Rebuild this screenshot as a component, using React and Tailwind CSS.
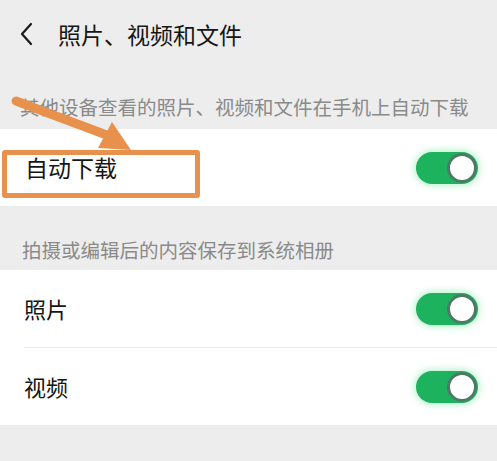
import React from "react";

function Toggle() {
  return (
    <div className="relative h-[32px] w-[62px] rounded-full bg-[#1db35e] shadow-[0_0_6px_2px_rgba(60,220,120,0.35)]">
      <div className="absolute right-[1px] top-[1px] h-[30px] w-[30px] rounded-full border-[3px] border-[#4d7a66] bg-white" />
    </div>
  );
}

function Row({ label, divider }) {
  return (
    <div className="relative bg-white">
      <div className="flex h-[77px] items-center justify-between pl-[24px] pr-[19px]">
        <span className="text-[22px] text-[#151515]">{label}</span>
        <Toggle />
      </div>
      {divider && <div className="ml-[24px] h-px bg-[#ebebeb]" />}
    </div>
  );
}

export default function App() {
  return (
    <div
      className="relative h-[461px] w-[497px] overflow-hidden bg-[#ededed]"
      style={{ fontFamily: '"Noto Sans CJK SC", "Noto Sans", sans-serif' }}
    >
      <div className="flex h-[68px] items-center pl-[18px]">
        <svg width="18" height="26" viewBox="0 0 18 26" className="mr-[22px]">
          <path d="M13 3 L4 13 L13 23" fill="none" stroke="#1a1a1a" strokeWidth="2.2" strokeLinecap="round" strokeLinejoin="round" />
        </svg>
        <span className="text-[23px] text-[#151515]">照片、视频和文件</span>
      </div>
      <div className="flex h-[61px] items-end pb-[8px] pl-[20px] text-[19.5px] leading-[28px] text-[#8a8a8a]">
        其他设备查看的照片、视频和文件在手机上自动下载
      </div>
      <div className="bg-white">
        <div className="flex h-[77px] items-center justify-between pl-[25px] pr-[19px]">
          <span className="text-[23px] text-[#151515]">自动下载</span>
          <Toggle />
        </div>
      </div>
      <div className="flex h-[64px] items-end pb-[6px] pl-[22px] text-[19.5px] leading-[28px] text-[#8a8a8a]">
        拍摄或编辑后的内容保存到系统相册
      </div>
      <Row label="照片" divider />
      <Row label="视频" />

      {/* annotation overlay: orange box and arrow */}
      <div className="absolute left-[2px] top-[150px] h-[48px] w-[198px] rounded-[3px] border-[5px] border-[#e8914c]" />
      <svg className="absolute left-0 top-0" width="497" height="461" viewBox="0 0 497 461">
        <line x1="16" y1="101" x2="112" y2="137" stroke="#e8914c" strokeWidth="9" strokeLinecap="round" />
        <polygon points="112,122 131,150 98,148" fill="#e8914c" />
      </svg>
    </div>
  );
}
